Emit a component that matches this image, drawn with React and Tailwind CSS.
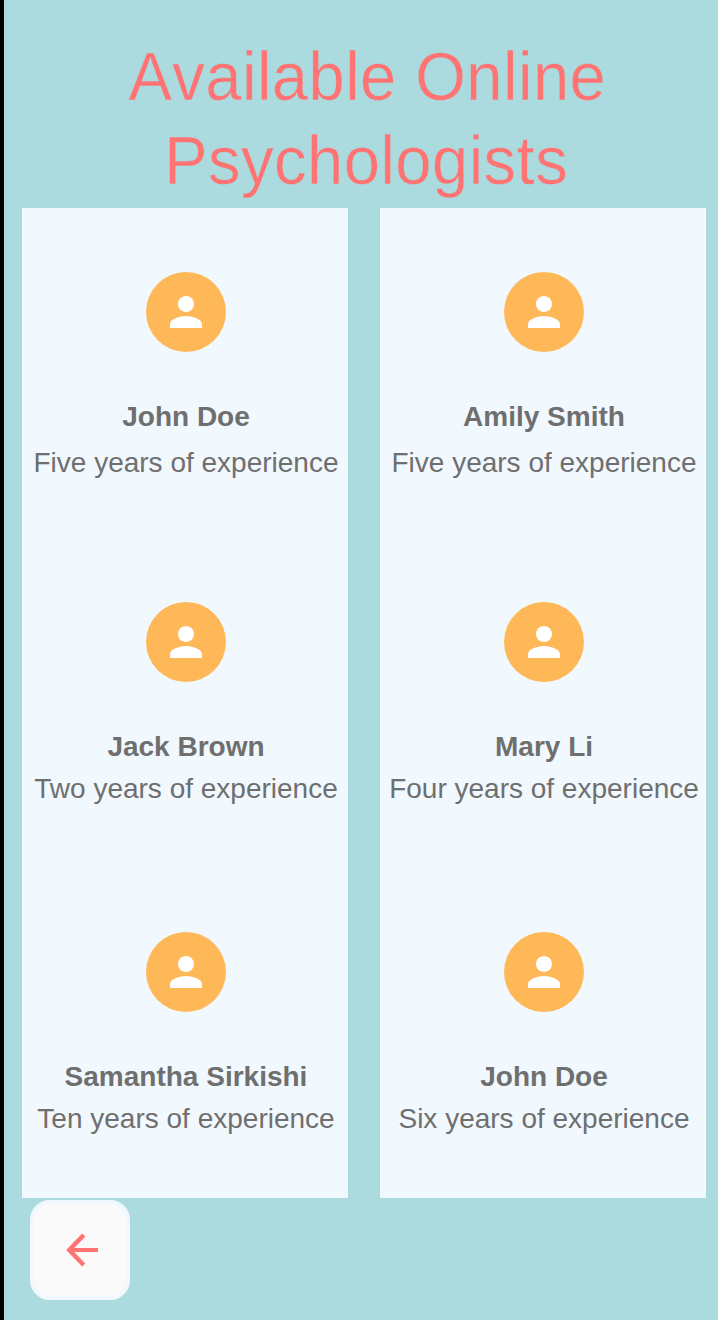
import React from "react";

const columns = [
  [
    { name: "John Doe", text: "Five years of experience", gap: "mt-3.5" },
    { name: "Jack Brown", text: "Two years of experience", gap: "mt-2.5" },
    { name: "Samantha Sirkishi", text: "Ten years of experience", gap: "mt-2.5" },
  ],
  [
    { name: "Amily Smith", text: "Five years of experience", gap: "mt-3.5" },
    { name: "Mary Li", text: "Four years of experience", gap: "mt-2.5" },
    { name: "John Doe", text: "Six years of experience", gap: "mt-2.5" },
  ],
];

function Card({ name, text, gap }) {
  return (
    <div className="flex h-[330px] flex-col items-center pt-16 pl-0.5">
      <div className="flex size-20 shrink-0 items-center justify-center rounded-full bg-[#ffb858]">
        <svg viewBox="0 0 24 24" className="size-12" fill="white">
          <path d="M12 12c2.21 0 4-1.79 4-4s-1.79-4-4-4-4 1.79-4 4 1.79 4 4 4zm0 2c-2.67 0-8 1.34-8 4v2h16v-2c0-2.66-5.33-4-8-4z" />
        </svg>
      </div>
      <h2 className="mt-[49px] text-[28px] leading-8 font-bold whitespace-nowrap">{name}</h2>
      <p className={`text-[28px] leading-8 whitespace-nowrap ${gap}`}>{text}</p>
    </div>
  );
}

export default function App() {
  return (
    <div className="h-[1320px] w-[718px] overflow-hidden border-l-4 border-black bg-[#abdbdf] font-['Liberation_Sans',Arial,sans-serif] text-[#6f6f6f]">
      <h1 className="flex h-[208px] flex-col items-center pt-[35px] pl-3 text-[69px] leading-[84px] font-normal tracking-[0.5px] whitespace-nowrap text-[#ff7373] [-webkit-text-stroke:0.4px_#abdbdf] [font-kerning:none]">
        <span className="scale-x-[0.943]">Available Online</span>
        <span className="mr-0.5 scale-x-[0.943]">Psychologists</span>
      </h1>
      <main className="ml-[18px] flex gap-8">
        {columns.map((items, i) => (
          <section key={i} className="h-[990px] w-[326px] bg-[#f1f8fe]">
            {items.map((item) => (
              <Card key={item.name} {...item} />
            ))}
          </section>
        ))}
      </main>
      <button aria-label="Back" className="mt-0.5 ml-[26px] flex size-[100px] items-center justify-center rounded-[20px] border-4 border-[#f1f8fe] bg-[#fafafa] pl-1">
        <svg viewBox="0 0 24 24" className="size-12" fill="none" stroke="#ff7373">
          <path d="M6 12H20" strokeWidth="2" />
          <path d="M12.1 5.3 5.6 12l6.5 6.7" strokeWidth="2.2" strokeLinecap="square" />
        </svg>
      </button>
    </div>
  );
}
